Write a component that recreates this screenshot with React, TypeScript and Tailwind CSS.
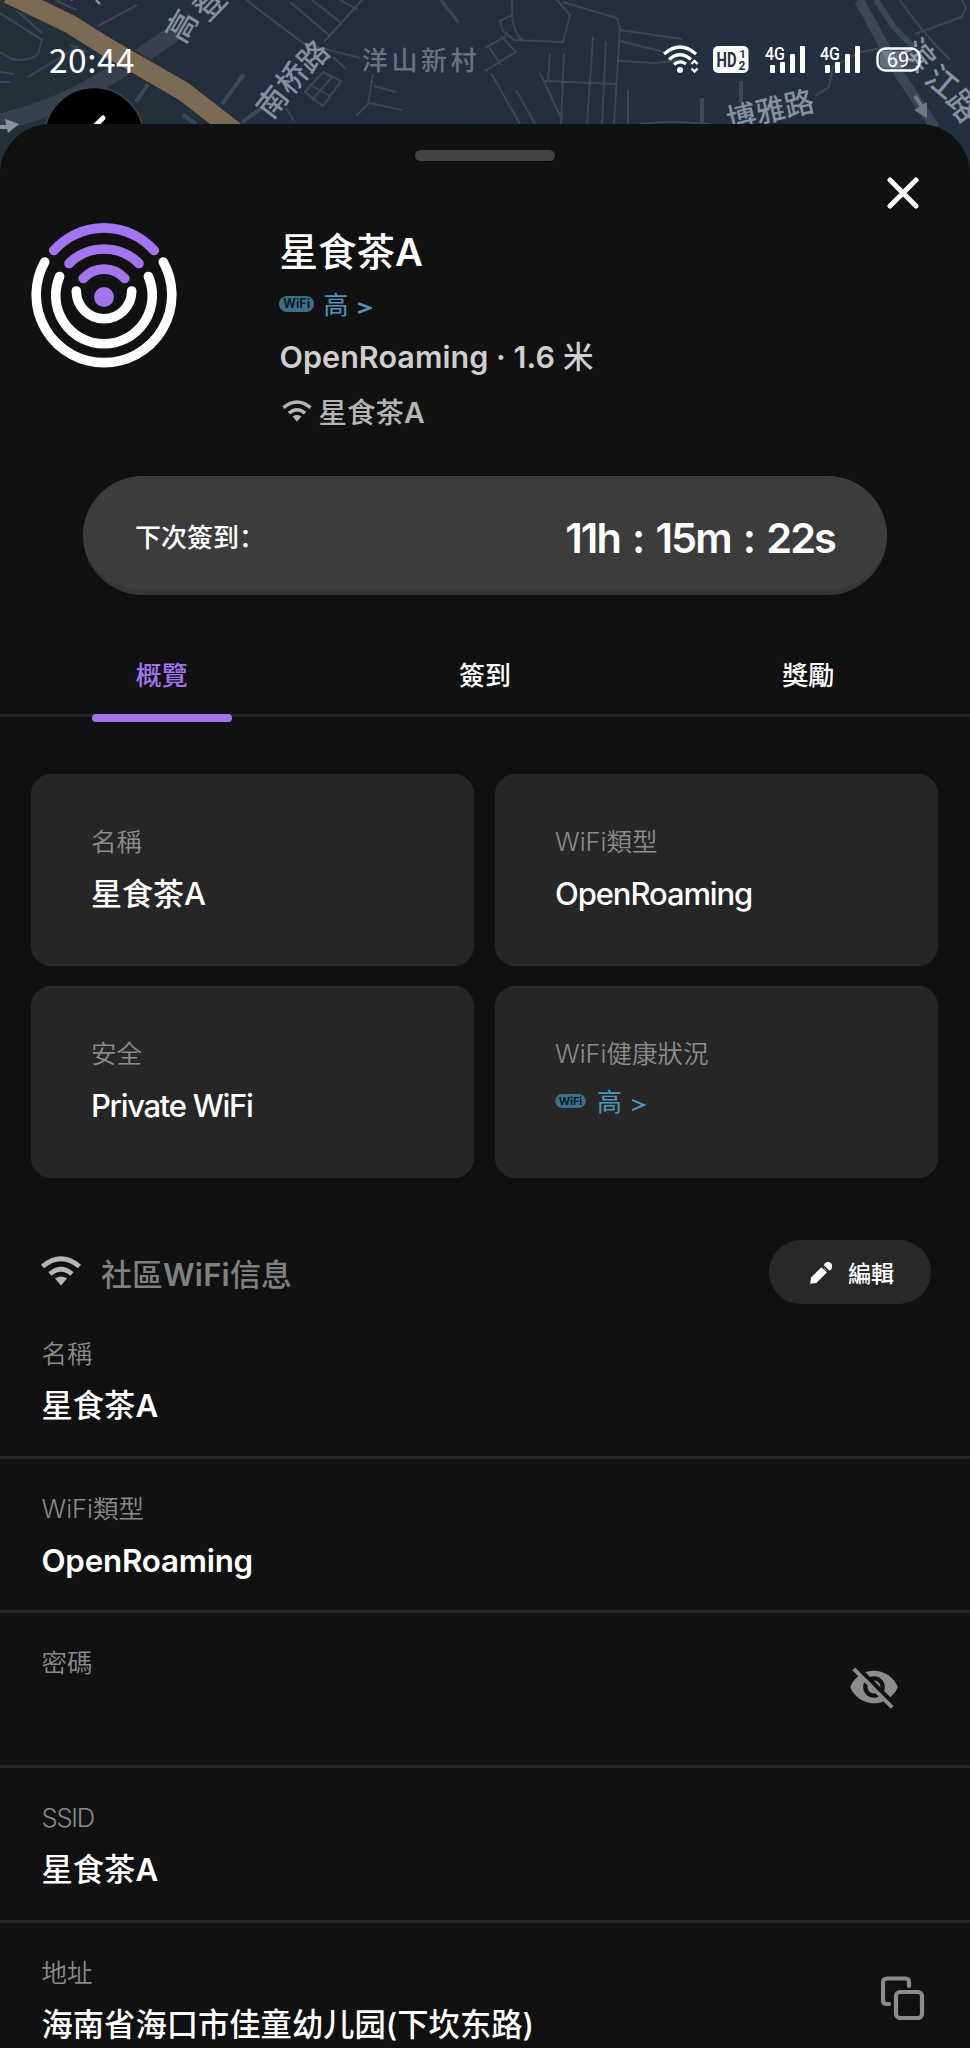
import React, { useState } from 'react';

type TabId = 'overview' | 'checkin' | 'rewards';

const TABS: { id: TabId; label: string }[] = [
  { id: 'overview', label: '概覽' },
  { id: 'checkin', label: '簽到' },
  { id: 'rewards', label: '獎勵' },
];

const MapBackground: React.FC = () => (
  <svg className="absolute inset-0 w-[970px] h-[190px]" viewBox="0 0 970 190" fill="none">
    <defs>
      <linearGradient id="land" x1="0" y1="0" x2="1" y2="0">
        <stop offset="0" stopColor="#222f3c" />
        <stop offset="0.25" stopColor="#232d3f" />
        <stop offset="1" stopColor="#242f3f" />
      </linearGradient>
    </defs>
    <rect width="970" height="190" fill="url(#land)" />
    <path d="M0 0H10L200 124V190H0Z" fill="#22303a" />

    {/* side roads */}
    <g stroke="#3a4757" strokeWidth="2">
      <path d="M0 13L42 40L38 54Q28 62 12 59L0 52M16 10L42 33M28 14L48 0M55 0L76 10M70 45L86 52M98 26L137 5" />
      <path d="M28 77L66 54L78 46M0 82H10M0 72L14 74" />
      <path d="M246 0L303 43L360 58M290 2L330 36M312 0L340 22M362 0L324 42M340 0L358 10" />
      <path d="M305 92L323 72L341 81L323 106ZM312 100L332 77M309 84L330 96M333 57L346 69M286 108L294 121" />
      <path d="M373 74L368 104L356 116M374 86L396 92M370 103L402 110" />
      <path d="M441 0L459 23" strokeWidth="3" />
      <path d="M512 0V15L500 21L503 31L514 40L563 42L570 15L557 0M512 15Q513 32 522 40M563 2L617 18L620 28L614 124M485 48L506 36M489 47L501 65M485 71L516 52L501 36M491 73L520 124M516 90L535 124M540 73L562 120M545 81L616 84M550 54L548 80M564 54L561 124M593 37L587 124M606 41L602 124M628 90V124M620 30L682 39M620 41L664 52M619 61L655 63L684 60" />
      <path d="M702 98V124M741 81V102" strokeWidth="4" />
      <path d="M815 96L829 87L833 67L860 52L882 48M900 0Q920 30 950 60M915 34L962 17L966 8L962 0M640 124Q670 120 710 124" />
    </g>
    <path d="M859 0L900 75L935 128" stroke="#3a4658" strokeWidth="10" />
    <path d="M876 0L893 26L914 48" stroke="#39465a" strokeWidth="6" />
    <path d="M0 122Q60 108 110 76T175 32" stroke="#35424e" strokeWidth="17" />
    <path d="M222 104L244 74M136 102L148 84M183 115L196 124M240 124L264 106" stroke="#3b485a" strokeWidth="4" />
    <path d="M8 -6L70 24L110 49L183 91L236 132" stroke="#2a2e34" strokeWidth="23" />
    <path d="M8 -6L70 24L110 49L183 91L236 132" stroke="#7b6a54" strokeWidth="19" />

    {/* direction arrows */}
    <path d="M0 127H8" stroke="#8993a1" strokeWidth="4" />
    <path d="M5 119L19 124L8 133Z" fill="#8993a1" />
    <path d="M915 96L922 107" stroke="#6e788b" strokeWidth="4" />
    <path d="M914 110L927 102L927 118Z" fill="#6e788b" />

    <path d="M96 0L100 4M71 0L75 -3" stroke="#8790a3" strokeWidth="2.5" />

    <g fill="#8790a3" fontFamily="'Noto Sans CJK SC', sans-serif" fontSize="31" fontWeight="500" textAnchor="middle">
      <text transform="translate(182 26) rotate(-60)" y="11">高</text>
      <text transform="translate(210 4) rotate(-46)" y="11">登</text>
      <text transform="translate(272 102) rotate(-52)" y="11" fontSize="30">南</text>
      <text transform="translate(292 78) rotate(-50)" y="11" fontSize="30">桥</text>
      <text transform="translate(313 56) rotate(-46)" y="11" fontSize="30">路</text>
      <text transform="translate(770 109) rotate(-13)" y="12" fontSize="29.5">博雅路</text>
      <text transform="translate(919 55) rotate(52)" y="11">滨</text>
      <text transform="translate(942 82) rotate(40)" y="11">江</text>
      <text transform="translate(963 106) rotate(52)" y="11">路</text>
      <text x="421" y="70" fill="#687286" fontSize="26" letterSpacing="3.6">洋山新村</text>
    </g>

    {/* back button, mostly covered by the sheet */}
    <circle cx="94" cy="137" r="49.5" fill="#000" stroke="#3c4550" strokeWidth="1.5" />
    <path d="M103 118L88 133" stroke="#fff" strokeWidth="5" strokeLinecap="round" />
  </svg>
);

const SignalIcon: React.FC = () => (
  <svg className="w-[40px] h-[30px]" viewBox="0 0 40 30" fill="#fff">
    <text x="0" y="16.5" fontFamily="Roboto, sans-serif" fontSize="18" fontWeight="500" textLength="20" lengthAdjust="spacingAndGlyphs">4G</text>
    <rect x="5" y="22" width="5" height="8" rx="1" />
    <rect x="15" y="19" width="5" height="11" rx="1" />
    <rect x="25" y="11" width="5" height="19" rx="1" />
    <rect x="35" y="3" width="5" height="27" rx="1" />
  </svg>
);

const StatusBar: React.FC = () => (
  <div className="relative flex h-[124px] items-start justify-between pl-[49px] pr-[49px] pt-[43px]">
    <div className="-mt-[2px] font-['Noto_Sans_CJK_SC'] text-[33.5px] leading-[36px] tracking-[0.5px] text-white">20:44</div>
    <div className="flex items-start">
      <svg className="mr-[14px] mt-[2px] h-[29px] w-[36px]" viewBox="0 0 36 29" fill="none" stroke="#fff" strokeWidth="3.2">
        <path d="M1 9Q17 -5 33 9M6 14.5Q17 5 28 14.5M11 19.5Q17 14.5 23 19" />
        <circle cx="17" cy="25" r="3" fill="#fff" stroke="none" />
        <path d="M28.5 19L31.5 16L34.5 19M28.5 23.5L31.5 26.5L34.5 23.5" strokeWidth="2.4" />
      </svg>
      <svg className="mr-[16px] mt-[2px] h-[29px] w-[36px]" viewBox="0 0 36 29">
        <rect x="0" y="1" width="35.5" height="27" rx="5" fill="#fff" />
        <g fill="#263040" fontFamily="Roboto, sans-serif" fontWeight="700">
          <text x="3.5" y="21.5" fontSize="20" textLength="20" lengthAdjust="spacingAndGlyphs">HD</text>
          <text x="26.5" y="12.5" fontSize="11">1</text>
          <text x="25.5" y="24.5" fontSize="12">2</text>
        </g>
      </svg>
      <div className="mr-[15.5px]"><SignalIcon /></div>
      <div className="mr-[16px]"><SignalIcon /></div>
      <svg className="mt-[4px] h-[25px] w-[45px]" viewBox="0 0 45 25">
        <rect x="1.5" y="1.5" width="42" height="22" rx="8" fill="#fff" fillOpacity="0.1" stroke="#fff" strokeWidth="2.4" />
        <path d="M9 4H28V21H9Q4 21 4 16V9Q4 4 9 4Z" fill="#fff" fillOpacity="0.22" />
        <text x="22" y="19.5" fontFamily="Roboto, sans-serif" fontSize="20" fill="#fff" textAnchor="middle">69</text>
      </svg>
    </div>
  </div>
);

const HotspotLogo: React.FC = () => (
  <svg className="h-[146px] w-[146px]" viewBox="0 0 146 146" fill="none" strokeWidth="9.6" strokeLinecap="round">
    <g stroke="#a374f0">
      <path d="M22.8 27.5A67 67 0 0 1 123.2 27.5" />
      <path d="M38 40.5A49.5 49.5 0 0 1 108 40.5" />
      <path d="M52.2 55.5A27.7 27.7 0 0 1 93.8 55.5" />
    </g>
    <g stroke="#fff">
      <path d="M13.7 39A67.8 67.8 0 1 0 132.3 39" />
      <path d="M28.6 53.5A48.3 48.3 0 1 0 117.4 53.5" />
      <path d="M45.3 68A27.7 27.7 0 1 0 100.7 68" />
    </g>
    <circle cx="73" cy="74" r="10" fill="#a374f0" />
  </svg>
);

const WifiIcon: React.FC<{ className?: string }> = ({ className }) => (
  <svg className={className} viewBox="0 0 40 30" fill="none" stroke="currentColor" strokeWidth="4.8">
    <path d="M1.5 10.5Q20 -5 38.5 10.5" />
    <path d="M9 18Q20 8.5 31 18" />
    <path d="M14 22.5Q20 18.5 26 22.5L20 29.5Z" fill="currentColor" stroke="none" />
  </svg>
);

const HealthBadge: React.FC<{ small?: boolean }> = ({ small }) => (
  <div className="flex h-[32px] items-center text-[#4d97bd]">
    <svg className={small ? 'mr-[11px] -mt-[3px] h-[14px] w-[31px]' : 'mr-[10px] -mt-[3px] h-[16px] w-[35px]'} viewBox="0 0 35 16">
      <rect width="35" height="16" rx="8" fill="#3b7088" />
      <text x="17.5" y="12.4" textAnchor="middle" fontFamily="Inter, sans-serif" fontSize="12.5" fontWeight="700" fill="#0d1c26">WiFi</text>
    </svg>
    <span className="text-[25px] leading-[32px]">高</span>
    {small ? (
      <svg className="ml-[10px] mt-[5px] h-[12px] w-[14px]" viewBox="0 0 14 12" fill="none" stroke="currentColor" strokeWidth="1.9"><path d="M0 1L12 6L0 11" /></svg>
    ) : (
      <svg className="ml-[9px] mt-[6px] h-[12px] w-[14px]" viewBox="0 0 14 12" fill="none" stroke="currentColor" strokeWidth="2.6"><path d="M0 1.3L12.5 6L0 10.7" /></svg>
    )}
  </div>
);

const InfoCard: React.FC<{ label: string; children: React.ReactNode }> = ({ label, children }) => (
  <div className="h-[192px] rounded-[20px] border border-[#2a2a2a] bg-[#262626] pl-[59px] pt-[49px]">
    <div className="text-[25.5px] font-[350] leading-[36px] text-[#8c8c8c]">{label}</div>
    {children}
  </div>
);

const InfoRow: React.FC<{ label: React.ReactNode; value?: React.ReactNode; action?: React.ReactNode; last?: boolean }> = ({ label, value, action, last }) => (
  <div className={`flex h-[154.7px] shrink-0 items-start justify-between border-[#272727] pl-[41.5px] pt-[32px] ${last ? '' : 'border-b-3'}`}>
    <div>
      <div className="text-[25.5px] font-[350] leading-[36px] text-[#8a8a8a]">{label}</div>
      <div className="mt-[14px] h-[40px] whitespace-nowrap text-[31.3px] font-medium leading-[40px] text-white">{value}</div>
    </div>
    {action}
  </div>
);

const App: React.FC = () => {
  const [tab, setTab] = useState<TabId>('overview');

  return (
    <div className="relative h-[2048px] w-[970px] overflow-hidden bg-[#111111] font-[Inter,'Noto_Sans_CJK_SC',sans-serif]">
      <MapBackground />
      <StatusBar />

      <div className="relative flex h-[1924px] flex-col overflow-hidden rounded-t-[50px] bg-[#111111]">
        {/* Drag handle */}
        <div className="mx-auto mt-[26px] h-[11px] w-[140px] shrink-0 rounded-full bg-[#434343]" />
        <button className="absolute right-[51px] top-[53px] h-[32px] w-[32px]">
          <svg viewBox="0 0 32 32" fill="none" stroke="#fff" strokeWidth="5" strokeLinecap="round">
            <path d="M3 3L29 29M29 3L3 29" />
          </svg>
        </button>

        {/* Hotspot summary */}
        <div className="flex h-[315px] shrink-0 pl-[31px]">
          <div className="mt-[62px] w-[248.5px]"><HotspotLogo /></div>
          <div className="mt-[63px]">
            <h1 className="text-[38.5px] font-medium leading-[56px] text-white">星食茶<span className="font-semibold">A</span></h1>
            <div className="-ml-px mt-[9px]"><HealthBadge /></div>
            <div className="mt-[14px] whitespace-nowrap text-[30.5px] font-medium leading-[44px] text-[#cfcfcf]">
              <span className="font-semibold tracking-[0.05px]">OpenRoaming · 1.6</span> 米
            </div>
            <div className="mt-[14px] flex items-center text-[#b5b5b5]">
              <WifiIcon className="-mt-[5px] ml-[2px] mr-[7px] h-[22px] w-[30px]" />
              <span className="text-[28.5px] font-medium leading-[40px]">星食茶<span className="font-semibold">A</span></span>
            </div>
          </div>
        </div>

        {/* Next check-in countdown */}
        <div className="mx-[83px] flex h-[119px] shrink-0 items-center justify-between rounded-full border border-b-[5px] border-[#404040] border-b-[#353535] bg-[#3c3c3c] pl-[51px] pr-[51px] text-white">
          <span className="mt-[8px] text-[26px] font-medium leading-[36px]">下次簽到：</span>
          <span className="mt-[8px] whitespace-nowrap text-[41.5px] font-semibold leading-[50px] tracking-[-1.9px] [word-spacing:3.5px]">11h : 15m : 22s</span>
        </div>

        {/* Tabs */}
        <div className="mt-[60px] grid h-[62px] shrink-0 grid-cols-3 border-b-3 border-[#262626]">
          {TABS.map((t) => (
            <button
              key={t.id}
              onClick={() => setTab(t.id)}
              className={`relative flex items-start justify-center pt-px text-[26px] font-medium leading-[40px] ${tab === t.id ? 'text-[#a374f0]' : 'text-white'}`}
            >
              {t.label}
              {tab === t.id && <span className="absolute -bottom-[8px] left-1/2 h-[8px] w-[140px] -translate-x-1/2 rounded-[4px] bg-[#a374f0]" />}
            </button>
          ))}
        </div>

        <div className="mt-[57px] grid shrink-0 grid-cols-2 gap-x-[21px] gap-y-[20px] pl-[31px] pr-[32px]">
          <InfoCard label="名稱">
            <div className="mt-[14px] text-[31px] font-medium leading-[40px] text-white">星食茶A</div>
          </InfoCard>
          <InfoCard label="WiFi類型">
            <div className="mt-[14px] text-[31px] font-[450] leading-[40px] tracking-[-1.1px] text-white">OpenRoaming</div>
          </InfoCard>
          <InfoCard label="安全">
            <div className="mt-[14px] text-[31px] font-[450] leading-[40px] tracking-[-1.3px] text-white">Private WiFi</div>
          </InfoCard>
          <InfoCard label="WiFi健康狀況">
            <div className="mt-[14px]"><HealthBadge small /></div>
          </InfoCard>
        </div>

        {/* Community info */}
        <div className="mt-[62px] flex h-[64px] shrink-0 items-center pl-[41px] pr-[39px]">
          <WifiIcon className="-mt-[3px] h-[30px] w-[40px] text-[#b5b5b5]" />
          <h2 className="ml-[20px] mt-[5px] text-[31px] font-medium leading-[44px] text-[#808080]">
            社區<span className="font-semibold tracking-[0.2px]">WiFi</span>信息
          </h2>
          <button className="ml-auto flex h-[64px] w-[162px] items-center rounded-full bg-[#282828] pl-[41px] text-[23px] font-medium text-white">
            <svg className="mr-[16px] mt-px h-[22px] w-[22px]" viewBox="0 0 22 22" fill="#fff">
              <path d="M0.2 21.8L1 15.5L11.5 5.2L16.9 10.6L6.4 21Z" />
              <circle cx="18" cy="4.4" r="4.3" />
              <path d="M12.6 3.2L18.9 9.5" stroke="#282828" strokeWidth="1.8" />
            </svg>
            <span className="mt-[4px]">編輯</span>
          </button>
        </div>

        <div className="flex flex-col">
          <InfoRow label="名稱" value={<>星食茶<span className="font-semibold">A</span></>} />
          <InfoRow label="WiFi類型" value={<span className="font-semibold tracking-[-0.2px]">OpenRoaming</span>} />
          <InfoRow
            label="密碼"
            action={
              <svg className="mr-[70px] mt-[16px] h-[52px] w-[52px]" viewBox="0 0 24 24" fill="#8c8c8c">
                <path d="M12 7c2.76 0 5 2.24 5 5 0 .65-.13 1.26-.36 1.83l2.92 2.92c1.51-1.26 2.7-2.89 3.43-4.75-1.73-4.39-6-7.5-11-7.5-1.4 0-2.74.25-3.98.7l2.16 2.16C10.74 7.13 11.35 7 12 7zM2 4.27l2.28 2.28.46.46C3.08 8.3 1.78 10.02 1 12c1.73 4.39 6 7.5 11 7.5 1.55 0 3.03-.3 4.38-.84l.42.42L19.73 22 21 20.73 3.27 3 2 4.27zM7.53 9.8l1.55 1.55c-.05.21-.08.43-.08.65 0 1.66 1.34 3 3 3 .22 0 .44-.03.65-.08l1.55 1.55c-.67.33-1.41.53-2.2.53-2.76 0-5-2.24-5-5 0-.79.2-1.53.53-2.2zm4.31-.78l3.15 3.15.02-.16c0-1.66-1.34-3-3-3l-.17.01z" />
              </svg>
            }
          />
          <InfoRow label={<span className="tracking-[-1.2px]">SSID</span>} value={<>星食茶<span className="font-semibold">A</span></>} />
          <InfoRow
            label="地址"
            value="海南省海口市佳童幼儿园(下坎东路)"
            last
            action={
              <svg className="mr-[45px] mt-[21px] h-[44px] w-[44px]" viewBox="0 0 44 44" fill="none" stroke="#8c8c8c" strokeWidth="4.2" strokeLinecap="round">
                <rect x="15" y="16" width="26" height="26" rx="4" />
                <path d="M28 10V6Q28 2.5 24 2.5H6Q2 2.5 2 6.5V24Q2 28 6 28H8" />
              </svg>
            }
          />
        </div>
      </div>
    </div>
  );
};

export default App;
